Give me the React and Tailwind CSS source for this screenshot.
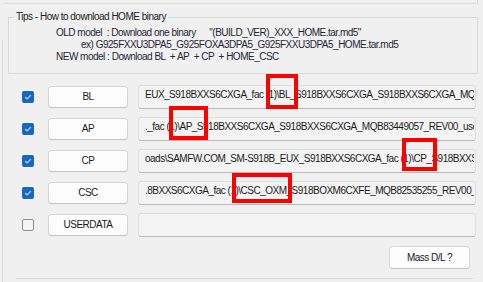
import React from "react";

function Check({ checked }) {
  if (!checked) {
    return (
      <div className="w-[12px] h-[12px] rounded-[2px] border border-[#8b8b8b] bg-[#f4f4f4]" />
    );
  }
  return (
    <div className="w-[12px] h-[12px] rounded-[2px] bg-[#1a66c4] flex items-center justify-center">
      <svg width="12" height="12" viewBox="0 0 12 12">
        <path d="M3.4 6.3 L5.1 7.9 L8.6 4.3" fill="none" stroke="#cfe0f5" strokeWidth="1.1" strokeLinecap="round" strokeLinejoin="round" />
      </svg>
    </div>
  );
}

function Row({ checked, label, text }) {
  return (
    <div className="flex items-center h-[22px]">
      <div className="w-[12px] flex justify-center">
        <Check checked={checked} />
      </div>
      <div className="ml-[14px] w-[80px] h-[22px] rounded-[4px] bg-[#fdfdfd] border border-[#d6d6d6] border-b-[#c2c2c2] flex items-center justify-center text-[#1b1b1b]">
        {label}
      </div>
      <div className="ml-[10px] w-[338px] h-[24px] rounded-[3px] bg-[#f3f3f3] border border-[#dedede] border-b-[#b9b9b9] pl-[6px] pr-[1px] pt-[3px] overflow-hidden">
        <div className="overflow-hidden whitespace-nowrap text-[#1b1b1b]">{text}</div>
      </div>
    </div>
  );
}

export default function App() {
  return (
    <div
      className="w-[483px] h-[282px] bg-[#f0f0f0] relative overflow-hidden flex text-[10px] leading-[12px] tracking-[-0.5px]"
      style={{ fontFamily: '"Liberation Sans", Arial, sans-serif' }}
    >
      <div className="w-[3px] flex flex-col">
        <div className="h-[40px]" />
        <div className="flex-1 border-r border-[#dadada]" />
      </div>
      <div className="flex-1 flex flex-col">
        <div className="h-[4px] mr-[5px] border-b border-r border-[#dadada]" />
        <fieldset className="mt-[7px] ml-[5px] mr-[5px] border border-[#d9d9d9] pb-[10px] text-[#1e2536]">
          <legend className="ml-[5px] px-[2px] text-[#222]">Tips - How to download HOME binary</legend>
          <div className="pl-[47px] pt-[4px]">
            <div className="whitespace-pre">{'OLD model  : Download one binary      "(BUILD_VER)_XXX_HOME.tar.md5"'}</div>
            <div className="pl-[25px] whitespace-pre">ex) G925FXXU3DPA5_G925FOXA3DPA5_G925FXXU3DPA5_HOME.tar.md5</div>
            <div className="whitespace-pre">NEW model : Download BL  + AP  + CP  + HOME_CSC</div>
          </div>
        </fieldset>
        <div className="mt-[12px] pl-[19px] flex flex-col gap-[10px]">
          <Row checked label="BL" text={"EUX_S918BXXS6CXGA_fac (1)\\BL_S918BXXS6CXGA_S918BXXS6CXGA_MQB83449057"} />
          <Row checked label="AP" text={"._fac (1)\\AP_S918BXXS6CXGA_S918BXXS6CXGA_MQB83449057_REV00_user_low"} />
          <Row checked label="CP" text={"oads\\SAMFW.COM_SM-S918B_EUX_S918BXXS6CXGA_fac (1)\\CP_S918BXXS6CXGA"} />
          <Row checked label="CSC" text={".8BXXS6CXGA_fac (1)\\CSC_OXM_S918BOXM6CXFE_MQB82535255_REV00_user"} />
          <Row checked={false} label="USERDATA" text="" />
        </div>
        <div className="mt-[10px] flex justify-end pr-[13px]">
          <div className="w-[81px] h-[23px] rounded-[4px] bg-[#fdfdfd] border border-[#d6d6d6] border-b-[#c2c2c2] flex items-center justify-center text-[#1b1b1b]">
            Mass D/L ?
          </div>
        </div>
        <div className="mt-[9px] ml-[13px] mr-[10px] border-t border-[#d6d6d6]" />
      </div>

      <div className="absolute left-[266px] top-[74px] w-[32px] h-[35px] border-[4px] border-[#ff0000]" />
      <div className="absolute left-[169px] top-[106px] w-[39px] h-[34px] border-[4px] border-[#ff0000]" />
      <div className="absolute left-[402px] top-[138px] w-[35px] h-[33px] border-[4px] border-[#ff0000]" />
      <div className="absolute left-[232px] top-[173px] w-[60px] h-[30px] border-[4px] border-[#ff0000]" />
    </div>
  );
}
